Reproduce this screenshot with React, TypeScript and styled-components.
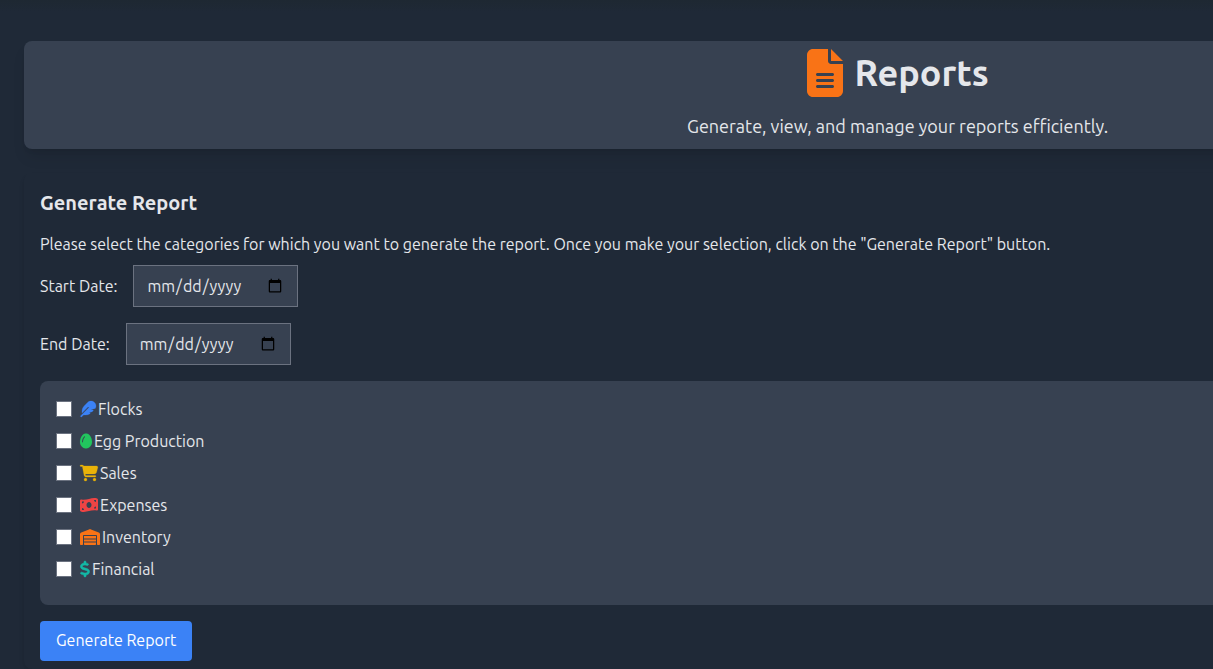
import React from "react";
import styled, { createGlobalStyle } from "styled-components";
import type { IconType } from "react-icons";
import {
  FaCartShopping,
  FaDollarSign,
  FaEgg,
  FaFeather,
  FaFileLines,
  FaMoneyBillWave,
  FaWarehouse,
} from "react-icons/fa6";

const GlobalStyle = createGlobalStyle`
  *, *::before, *::after {
    box-sizing: border-box;
  }

  body {
    margin: 0;
    background: #1f2937;
    color: #e5e7eb;
    font-family: Ubuntu, "Noto Sans", sans-serif;
    font-size: 16px;
    line-height: 24px;
  }

  h1, h2, p {
    margin: 0;
  }
`;

const Page = styled.div`
  min-height: 100vh;
  overflow: hidden;
  background: linear-gradient(#1e2832, #1f2937 12px);
`;

const Main = styled.main`
  display: flex;
  flex-direction: column;
  gap: 24px;
  width: 148%;
  padding: 41px 24px 0;
`;

const Banner = styled.header`
  display: flex;
  flex-direction: column;
  align-items: center;
  gap: 16px;
  padding: 8px;
  border-radius: 8px;
  background: #374151;
  box-shadow: 0 10px 15px -3px rgba(0, 0, 0, 0.1), 0 4px 6px -4px rgba(0, 0, 0, 0.1);
`;

const BannerTitle = styled.h1`
  display: flex;
  align-items: center;
  gap: 12px;
  font-size: 36px;
  font-weight: 600;
  line-height: 46px;

  svg {
    width: 36px;
    height: 48px;
    color: #f97316;
  }
`;

const BannerText = styled.p`
  padding-bottom: 2px;
  font-size: 18px;
  line-height: 26px;
  color: #e5e7eb;
`;

const Section = styled.section`
  display: flex;
  flex-direction: column;
  align-items: flex-start;
  gap: 16px;
  padding: 16px 16px 8px;
  border-radius: 8px;
  box-shadow: 0 4px 6px -1px rgba(0, 0, 0, 0.1), 0 2px 4px -2px rgba(0, 0, 0, 0.1);
`;

const SectionTitle = styled.h2`
  font-size: 20px;
  font-weight: 600;
  line-height: 28px;
`;

const Fields = styled.div`
  display: flex;
  flex-direction: column;
  gap: 16px;
`;

const Intro = styled.div`
  display: flex;
  flex-direction: column;
  gap: 10px;
  line-height: 22px;
`;

const Field = styled.div`
  display: flex;
  align-items: center;
  gap: 16px;
`;

const DateInput = styled.input`
  height: 42px;
  padding: 8px 12px;
  border: 1px solid #6b7280;
  border-radius: 0;
  background: #374151;
  color: #e5e7eb;
  font: inherit;
`;

const Categories = styled.fieldset`
  display: flex;
  flex-direction: column;
  align-self: stretch;
  gap: 8px;
  margin: 0;
  padding: 16px 16px 24px;
  border: 0;
  border-radius: 8px;
  background: #374151;
`;

const Category = styled.label`
  display: flex;
  align-items: center;
  gap: 8px;
  height: 24px;
`;

const Checkbox = styled.input`
  appearance: none;
  width: 16px;
  height: 16px;
  margin: 0;
  border: 1px solid #6b7280;
  background: #fff;

  &:checked {
    background: #2563eb;
  }
`;

const CategoryName = styled.span<{ $tint: string; $iconWidth: number; $stroke: number }>`
  display: flex;
  align-items: center;
  gap: 2px;

  svg {
    width: ${({ $iconWidth }) => $iconWidth}px;
    height: 16px;
    overflow: visible;
    color: ${({ $tint }) => $tint};
    stroke-width: ${({ $stroke }) => $stroke};
  }
`;

const GenerateButton = styled.button`
  height: 40px;
  padding: 7px 16px 9px;
  border: 0;
  border-radius: 4px;
  background: #3b82f6;
  color: #fff;
  font: inherit;
  cursor: pointer;
`;

interface CategoryItem {
  name: string;
  tint: string;
  icon: IconType;
  iconWidth: number;
  stroke: number;
}

const categories: CategoryItem[] = [
  { name: "Flocks", tint: "#3b82f6", icon: FaFeather, iconWidth: 16, stroke: 8 },
  { name: "Egg Production", tint: "#22c55e", icon: FaEgg, iconWidth: 12, stroke: 4 },
  { name: "Sales", tint: "#eab308", icon: FaCartShopping, iconWidth: 18, stroke: 8 },
  { name: "Expenses", tint: "#ef4444", icon: FaMoneyBillWave, iconWidth: 18, stroke: 0 },
  { name: "Inventory", tint: "#f97316", icon: FaWarehouse, iconWidth: 20, stroke: 0 },
  { name: "Financial", tint: "#14b8a6", icon: FaDollarSign, iconWidth: 10, stroke: 20 },
];

export default function App() {
  return (
    <Page>
      <GlobalStyle />
      <Main>
        <Banner>
          <BannerTitle>
            <FaFileLines aria-hidden />
            Reports
          </BannerTitle>
          <BannerText>Generate, view, and manage your reports efficiently.</BannerText>
        </Banner>

        <Section>
          <SectionTitle>Generate Report</SectionTitle>
          <Intro>
            <p>
              Please select the categories for which you want to generate the report. Once you make
              your selection, click on the "Generate Report" button.
            </p>
            <Fields>
              <Field>
                <label htmlFor="start-date">Start Date:</label>
                <DateInput id="start-date" type="date" />
              </Field>
              <Field>
                <label htmlFor="end-date">End Date:</label>
                <DateInput id="end-date" type="date" />
              </Field>
            </Fields>
          </Intro>
          <Categories aria-label="Report categories">
            {categories.map(({ name, tint, icon: Icon, iconWidth, stroke }) => (
              <Category key={name}>
                <Checkbox type="checkbox" name={name} />
                <CategoryName $tint={tint} $iconWidth={iconWidth} $stroke={stroke}>
                  <Icon aria-hidden />
                  {name}
                </CategoryName>
              </Category>
            ))}
          </Categories>
          <GenerateButton type="button">Generate Report</GenerateButton>
        </Section>
      </Main>
    </Page>
  );
}
